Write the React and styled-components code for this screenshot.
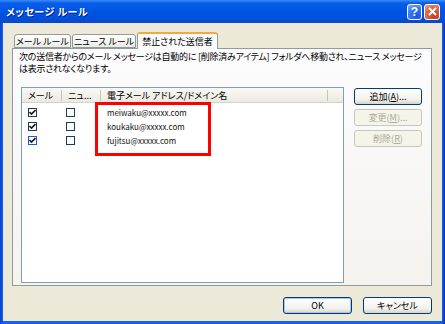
import React from "react";
import styled, { createGlobalStyle } from "styled-components";

const GlobalStyle = createGlobalStyle`
    html, body {
        margin: 0;
        padding: 0;
        background: #ffffff;
    }
    * {
        box-sizing: border-box;
    }
`;

const FONT = `"Noto Sans CJK JP", "Liberation Sans", sans-serif`;

const Window = styled.div`
    width: 445px;
    height: 324px;
    display: flex;
    flex-direction: column;
    background: linear-gradient(90deg, #0841d0 0px, #1660f0 3px, #1660f0 442px, #0831b0 445px);
    font-family: ${FONT};
    font-feature-settings: "palt";
    font-size: 9px;
    color: #000;
    overflow: hidden;
`;

const TitleBar = styled.div`
    height: 23px;
    flex: none;
    display: flex;
    align-items: center;
    padding: 0 5px 0 6px;
    background: linear-gradient(180deg, #3c8cf8 0px, #0a5ee8 3px, #0055e5 10px, #0050dd 18px, #0a48c8 23px);
`;

const Title = styled.div`
    flex: 1;
    color: #fff;
    font-weight: bold;
    font-size: 10px;
    letter-spacing: 0.5px;
    text-shadow: 1px 1px 0 #0a1e78;
`;

const CapButton = styled.div`
    width: ${p => p.$w || 16}px;
    height: 16px;
    margin-left: 2px;
    border: 1px solid #fff;
    border-radius: 3px;
    display: flex;
    align-items: center;
    justify-content: center;
    background: ${p => p.$close
        ? "radial-gradient(circle at 70% 80%, #c43b1a 0%, #e06a48 60%, #f0a080 100%)"
        : "radial-gradient(circle at 70% 80%, #1a52e0 0%, #3b7cf4 60%, #8cb4fc 100%)"};
    color: #fff;
    font-family: "Liberation Sans", sans-serif;
    font-weight: bold;
    font-size: 12px;
`;

const Body = styled.div`
    flex: 1;
    margin: 0 3px 3px 3px;
    background: #ece9d8;
    display: flex;
    flex-direction: column;
    padding: 9px 10px 0 9px;
`;

const TabRow = styled.div`
    display: flex;
    align-items: flex-end;
    height: 16px;
    padding-left: 2px;
    position: relative;
    z-index: 1;
`;

const Tab = styled.div`
    width: ${p => p.$w}px;
    height: ${p => (p.$active ? 17 : 14)}px;
    margin-right: ${p => (p.$active ? 0 : 1)}px;
    margin-bottom: ${p => (p.$active ? -1 : 0)}px;
    display: flex;
    align-items: center;
    justify-content: center;
    border: 1px solid #919b9c;
    border-bottom: ${p => (p.$active ? "none" : "1px solid #919b9c")};
    border-top: ${p => (p.$active ? "2px solid #f7a838" : "1px solid #919b9c")};
    border-radius: 3px 3px 0 0;
    background: ${p => (p.$active ? "#fcfcfe" : "linear-gradient(#ffffff, #ecebe5)")};
    font-size: 9px;
    white-space: nowrap;
`;

const Panel = styled.div`
    width: 420px;
    height: 238px;
    border: 1px solid #919b9c;
    background: linear-gradient(#fcfcfe, #f4f3ee);
    display: flex;
    flex-direction: column;
    padding: 2px 0 0 6px;
`;

const Notice = styled.p`
    margin: 0;
    line-height: 12px;
    letter-spacing: -0.25px;
    white-space: nowrap;
`;

const PanelMain = styled.div`
    display: flex;
    margin-top: 12px;
    padding-left: 2px;
    gap: 10px;
`;

const ListBox = styled.div`
    width: 323px;
    height: 196px;
    border: 1px solid #7f9db9;
    background: #fff;
    position: relative;
`;

const Header = styled.div`
    height: 15px;
    display: flex;
    align-items: center;
    background: linear-gradient(#f9f8f3, #ebeae2);
    border-bottom: 1px solid #d6d3c6;
    margin-bottom: 2px;
`;

const Col = styled.div`
    width: ${p => p.$w}px;
    flex: none;
    height: 100%;
    display: flex;
    align-items: center;
    padding-left: ${p => p.$pad || 6}px;
    border-right: ${p => (p.$line ? "1px solid #c7c5b2" : "none")};
    white-space: nowrap;
    overflow: hidden;
`;

const HeadCell = styled(Col)`
    height: 11px;
`;

const Row = styled.div`
    height: 14px;
    display: flex;
    align-items: center;
`;

const Box = styled.div`
    width: 9px;
    height: 9px;
    border: 1px solid ${p => (p.$blue ? "#1c5bd0" : "#1c3a5c")};
    background: #fff;
    display: flex;
    align-items: center;
    justify-content: center;
`;

const Email = styled.div`
    padding-left: 6px;
    font-size: 8px;
    color: #111;
`;

const Highlight = styled.div`
    position: absolute;
    left: 73px;
    top: 14px;
    width: 116px;
    height: 54px;
    border: 3px solid #ff0000;
    pointer-events: none;
`;

const SideButtons = styled.div`
    display: flex;
    flex-direction: column;
    gap: 4px;
    padding-top: 1px;
`;

const Btn = styled.div`
    width: ${p => p.$w || 68}px;
    height: 17px;
    border: 1px solid ${p => (p.$disabled ? "#c9c7ba" : "#003c74")};
    border-radius: 3px;
    background: ${p => (p.$disabled ? "#f5f4ea" : "linear-gradient(#ffffff, #f2f1ec 70%, #d8d4c8)")};
    color: ${p => (p.$disabled ? "#aca899" : "#000")};
    box-shadow: ${p => (p.$default ? "inset 0 0 0 1px #a8c4f0" : "none")};
    display: flex;
    align-items: center;
    justify-content: center;
    font-size: 9px;
    white-space: nowrap;
`;

const Footer = styled.div`
    display: flex;
    justify-content: flex-end;
    gap: 11px;
    margin-top: 11px;
`;

const Check = () => (
    <svg width="7" height="7" viewBox="0 0 7 7">
        <path d="M0.5 3 L2.5 5 L6.5 1" stroke="#1a1a1a" strokeWidth="1.6" fill="none" />
    </svg>
);

const rows = [
    { email: "meiwaku@xxxxx.com", mail: true, news: false },
    { email: "koukaku@xxxxx.com", mail: true, news: false },
    { email: "fujitsu@xxxxx.com", mail: true, news: false, blue: true }
];

const App = () => {
    return (
        <>
            <GlobalStyle />
            <Window>
                <TitleBar>
                    <Title>メッセージ ルール</Title>
                    <CapButton $w={15}>?</CapButton>
                    <CapButton $close>
                        <svg width="9" height="9" viewBox="0 0 9 9">
                            <path d="M1 1 L8 8 M8 1 L1 8" stroke="#fff" strokeWidth="2" />
                        </svg>
                    </CapButton>
                </TitleBar>
                <Body>
                    <TabRow>
                        <Tab $w={57}>メール ルール</Tab>
                        <Tab $w={64}>ニュース ルール</Tab>
                        <Tab $w={81} $active>禁止された送信者</Tab>
                    </TabRow>
                    <Panel>
                        <Notice>次の送信者からのメール メッセージは自動的に [削除済みアイテム] フォルダへ移動され、ニュース メッセージ</Notice>
                        <Notice>は表示されなくなります。</Notice>
                        <PanelMain>
                            <ListBox>
                                <Header>
                                    <HeadCell $w={40} $line>メール</HeadCell>
                                    <HeadCell $w={39} $line>ニュ...</HeadCell>
                                    <HeadCell $w={227} $line>電子メール アドレス/ドメイン名</HeadCell>
                                </Header>
                                {rows.map(r => (
                                    <Row key={r.email}>
                                        <Col $w={40} $pad={6}>
                                            <Box $blue={r.blue}>{r.mail && <Check />}</Box>
                                        </Col>
                                        <Col $w={39} $pad={4}>
                                            <Box>{r.news && <Check />}</Box>
                                        </Col>
                                        <Email>{r.email}</Email>
                                    </Row>
                                ))}
                                <Highlight />
                            </ListBox>
                            <SideButtons>
                                <Btn>追加(<u>A</u>)...</Btn>
                                <Btn $disabled>変更(<u>M</u>)...</Btn>
                                <Btn $disabled>削除(<u>R</u>)</Btn>
                            </SideButtons>
                        </PanelMain>
                    </Panel>
                    <Footer>
                        <Btn $w={69} $default>OK</Btn>
                        <Btn $w={69}>キャンセル</Btn>
                    </Footer>
                </Body>
            </Window>
        </>
    );
};

export default App;
